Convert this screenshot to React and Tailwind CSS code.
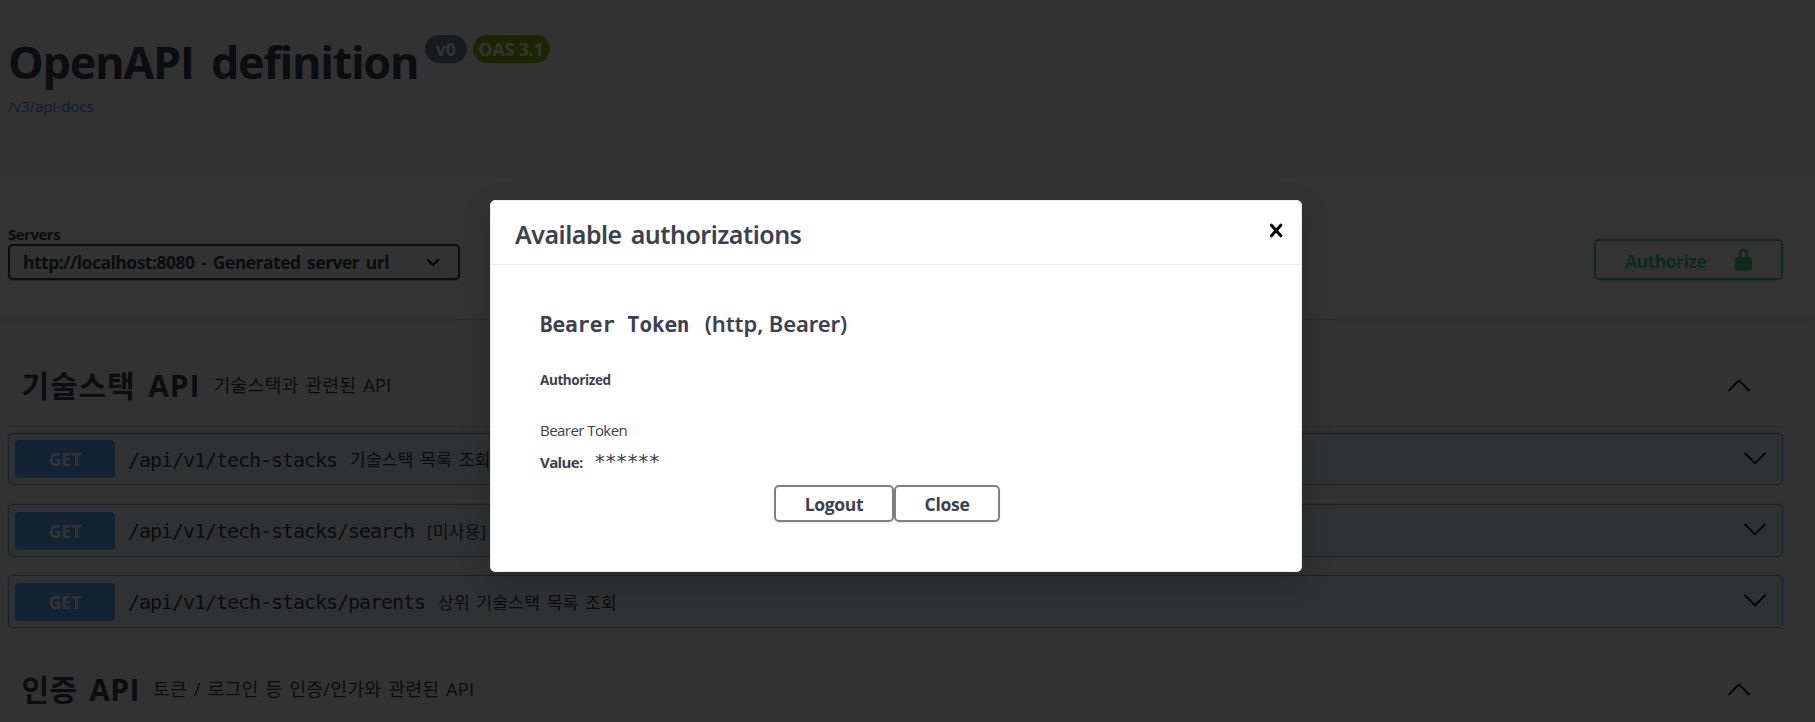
const FONT = "font-['Open_Sans','Noto_Sans_CJK_KR',sans-serif]";
const HEADING = "font-['Noto_Sans','Noto_Sans_CJK_KR',sans-serif]";
const MONO = "font-['DejaVu_Sans_Mono','Liberation_Mono',monospace]";

const operations = [
  { path: "/api/v1/tech-stacks", summary: "기술스택 목록 조회", box: "h-[52px]" },
  { path: "/api/v1/tech-stacks/search", summary: "[미사용]", box: "h-[53px] mt-[19px]" },
  { path: "/api/v1/tech-stacks/parents", summary: "상위 기술스택 목록 조회", box: "h-[53px] mt-[18px]" },
];

function Chevron({ up, className }) {
  return (
    <svg className={className} width="22" height="13" viewBox="0 0 22 13" fill="none" stroke="#000" strokeWidth="1.7">
      <path d={up ? "M0.6 11.9 11 1.3 21.4 11.9" : "M0.6 0.8 11 11.4 21.4 0.8"} />
    </svg>
  );
}

function TagHeader({ name, nameClass, description, className }) {
  return (
    <div className={"flex items-center border-b border-[#3b4151]/30 pl-[13.5px] pr-[33px] " + className}>
      <h3 className={"whitespace-nowrap pt-[2px] text-[30px] font-bold leading-[40px] " + nameClass}>{name}</h3>
      <p className="ml-[13px] grow whitespace-nowrap text-[18.3px] leading-[30px] tracking-[0.2px] [word-spacing:1.9px]">{description}</p>
      <Chevron up />
    </div>
  );
}

function Operation({ path, summary, box }) {
  return (
    <div className={"flex items-center rounded-[5px] border border-[#61affe] bg-[#61affe]/10 pl-[6px] pr-[16px] shadow-[0_0_3px_rgba(0,0,0,0.19)] " + box}>
      <span className="flex h-[38px] w-[100px] items-center justify-center rounded-[4px] bg-[#61affe] pt-[1px] text-[17.5px] font-bold text-white">GET</span>
      <span className={"ml-[13px] whitespace-nowrap pt-[1px] text-[20px] leading-[26px] tracking-[-1.04px] " + MONO}>{path}</span>
      <span className="ml-[13px] grow whitespace-nowrap pt-[2px] text-[17px] leading-[24px] tracking-[0.25px] [word-spacing:2px]">{summary}</span>
      <Chevron className="mb-[2px]" />
    </div>
  );
}

function ModalButton({ children, className }) {
  return (
    <button className={"flex h-[37px] items-center justify-center rounded-[5px] border-2 border-[#808080] pl-[1px] pt-[1px] text-[17.5px] font-bold tracking-[-0.3px] shadow-[0_1px_2px_rgba(0,0,0,0.1)] " + className}>
      {children}
    </button>
  );
}

function AuthModal() {
  return (
    <div className="absolute left-[490px] top-[200px] flex h-[372px] w-[812px] flex-col rounded-[5px] border border-[#ebebeb] bg-white shadow-[0_10px_30px_rgba(0,0,0,0.2)]">
      <div className="flex h-[64px] items-center justify-between border-b border-[#ebebeb] pl-[24px] pr-[18px]">
        <h3 className={"pt-[2px] text-[25px] font-semibold leading-[32px] tracking-[-0.5px] [word-spacing:3px] " + HEADING}>Available authorizations</h3>
        <svg className="mb-[4px]" width="14" height="15" viewBox="0 0 14 15" fill="none" stroke="#000" strokeWidth="3" strokeLinecap="round">
          <path d="M2.5 2.2 11.8 12.8M11.8 2.2 2.5 12.8" />
        </svg>
      </div>
      <div className="flex flex-col px-[49px] pt-[42px]">
        <h4 className="flex items-baseline font-semibold leading-[32px]">
          <span className={"text-[21px] tracking-[-0.2px] " + MONO}>Bearer Token</span>
          <span className={"ml-[15.5px] text-[22px] tracking-[-0.1px] " + HEADING}>(http, Bearer)</span>
        </h4>
        <h6 className="mt-[29px] text-[13.5px] font-bold leading-[20px] tracking-[-0.4px]">Authorized</h6>
        <p className="mt-[28px] text-[15px] leading-[24px] tracking-[-0.55px]">Bearer Token</p>
        <div className="mt-[7px] flex items-center leading-[24px]">
          <span className="pt-[1px] text-[15px] font-bold tracking-[-0.6px]">Value:</span>
          <span className={"ml-[11px] pb-[2px] text-[20px] leading-[22px] tracking-[-1.15px] " + MONO}>******</span>
        </div>
        <div className="mt-[11px] flex justify-center pr-[19px]">
          <ModalButton className="w-[120px]">Logout</ModalButton>
          <ModalButton className="w-[106px]">Close</ModalButton>
        </div>
      </div>
    </div>
  );
}

export default function App() {
  return (
    <div className={"relative h-[722px] overflow-hidden bg-[#fafafa] text-[#3b4151] " + FONT}>
      <header className="h-[178px] px-2 pt-[30px]">
        <div className="flex items-start">
          <h2 className="whitespace-nowrap text-[45px] font-bold leading-[64px] tracking-[-1.3px] [word-spacing:7px]">OpenAPI definition</h2>
          <div className="ml-[6.5px] mt-[5px] flex gap-[6px] text-[17.5px] font-bold leading-[28px] text-white">
            <span className="w-[42px] rounded-full bg-[#7d8492] text-center">v0</span>
            <span className="w-[77px] rounded-full bg-[#89bf04] text-center">OAS 3.1</span>
          </div>
        </div>
        <a className="block text-[15px] leading-[24px] text-[#4990e2]">/v3/api-docs</a>
      </header>

      <section className="flex h-[141px] items-start justify-between bg-white pl-2 pr-[32px] shadow-[0_1px_2px_rgba(0,0,0,0.15)]">
        <div className="pt-[46px]">
          <div className="text-[15px] font-bold leading-[20px] tracking-[-0.5px]">Servers</div>
          <div className="flex h-[36px] w-[452px] items-center justify-between rounded-[5px] border-2 border-[#41444e] bg-[#f7f7f7] pl-[13px] pr-[18px] shadow-[0_1px_2px_rgba(0,0,0,0.25)]">
            <span className="whitespace-nowrap pt-[1px] text-[17.5px] font-bold tracking-[-0.5px] [word-spacing:2.5px]">http://localhost:8080 - Generated server url</span>
            <svg width="14" height="9" viewBox="0 0 14 9" fill="none" stroke="#000" strokeWidth="2">
              <path d="M1.2 1.2 7 7 12.8 1.2" />
            </svg>
          </div>
        </div>
        <button className="mt-[61px] flex h-[41px] w-[189px] items-center justify-between rounded-[5px] border-2 border-[#49cc90] pl-[29px] pr-[29px] text-[#49cc90] shadow-[0_1px_2px_rgba(0,0,0,0.1)]">
          <span className="pt-[4px] text-[17.5px] font-bold tracking-[-0.5px]">Authorize</span>
          <svg width="17" height="23" viewBox="0 0 17 23">
            <path d="M5.1 10V5.2a3.4 3.4 0 0 1 6.8 0V10" fill="none" stroke="#49cc90" strokeWidth="2.6" />
            <path d="M1.8 9h13.4Q17 9 17 10.8V20.5Q17 23 8.5 23T0 20.5V10.8Q0 9 1.8 9Z" fill="#49cc90" />
          </svg>
        </button>
      </section>

      <main className="pl-2 pr-[32px]">
        <TagHeader className="mt-[25px] h-[83px] mb-[6px]" name="기술스택 API" nameClass="tracking-[0.9px] [word-spacing:4px]" description="기술스택과 관련된 API" />
        {operations.map((op) => (
          <Operation key={op.path} {...op} />
        ))}
        <TagHeader className="mt-[20px] h-[83px]" name="인증 API" nameClass="tracking-[0.4px] [word-spacing:3.5px]" description="토큰 / 로그인 등 인증/인가와 관련된 API" />
      </main>

      <div className="absolute inset-0 bg-black/80" />
      <AuthModal />
    </div>
  );
}
